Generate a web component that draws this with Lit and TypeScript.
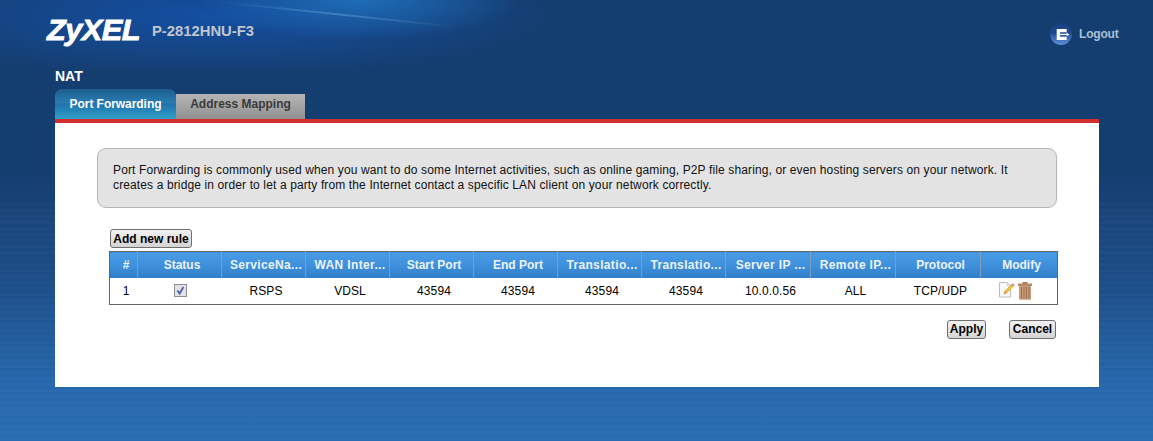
import { LitElement, html, css, svg } from "lit";
import { customElement } from "lit/decorators.js";

const HEADERS = ["#", "Status", "ServiceNa...", "WAN Inter...", "Start Port", "End Port", "Translatio...", "Translatio...", "Server IP ...", "Remote IP...", "Protocol", "Modify"];
const WIDTHS = [28, 84, 84, 84, 84, 84, 84, 84, 85, 85, 85, 77];
const CELLS = ["RSPS", "VDSL", "43594", "43594", "43594", "43594", "10.0.0.56", "ALL", "TCP/UDP"];

const logoutIcon = svg`<svg width="22" height="22" viewBox="0 0 22 22">
  <defs><linearGradient id="lg" x1="0" y1="0" x2="0" y2="1">
    <stop offset="0" stop-color="#1a3f80"/><stop offset=".5" stop-color="#1f4a8f"/><stop offset=".55" stop-color="#2d5ca6"/><stop offset="1" stop-color="#5b8fd2"/>
  </linearGradient></defs>
  <circle cx="11" cy="11" r="11" fill="url(#lg)"/>
  <path d="M6.7 6h10v3.2H10v4.6h6.7V17h-10z" fill="#fff"/>
  <path d="M10 10.7h6.6V9.5L19.4 11.4 16.6 13.2v-1.2H10z" fill="#fff"/>
</svg>`;

const editIcon = svg`<svg width="16" height="16" viewBox="0 0 16 16">
  <path d="M.5 .5h8l3 3v11.5H.5z" fill="#f8f8f8" stroke="#bcbcbc"/>
  <path d="M8.5 .5v3h3" fill="#e4e4e4" stroke="#c8c8c8" stroke-width=".7"/>
  <path d="M5.8 9.2L12.4 2.6l1.8 1.8L7.6 11z" fill="#f4c534" stroke="#c98a1c" stroke-width=".5"/>
  <path d="M4.6 12.2l1.2-3 1.8 1.8z" fill="#e5603f"/>
  <path d="M12.4 2.6l1.3-1.3 1.8 1.8-1.3 1.3z" fill="#dc7a86"/>
</svg>`;

const trashIcon = svg`<svg width="14" height="18" viewBox="0 0 14 18">
  <rect x="4.5" y="0" width="5" height="2" fill="#a67a58"/>
  <rect x="0" y="1.5" width="14" height="2.5" fill="#b58a68"/>
  <path d="M1 4h12v12.8q0 1-1 1H2q-1 0-1-1z" fill="#c99d7c"/>
  <path d="M3.5 5v11.5M6 5v11.5M8.5 5v11.5M11 5v11.5" stroke="#9b6d4c" stroke-width="1"/>
</svg>`;

const checkIcon = svg`<svg width="13" height="13" viewBox="0 0 13 13">
  <rect x=".5" y=".5" width="12" height="12" fill="#e2e2e8" stroke="#8f8f98"/>
  <path d="M3.4 6.5l2.2 3 3.8-6.5" fill="none" stroke="#4a62ad" stroke-width="1.8"/>
</svg>`;

@customElement("app-root")
export class AppRoot extends LitElement {
  static styles = css`
    :host {
      display: block;
      width: 1153px;
      height: 441px;
      overflow: hidden;
      position: relative;
      font-family: "Liberation Sans", Arial, sans-serif;
      background: linear-gradient(180deg, #153e70 0, #153e70 170px, #1c4d87 280px, #2667ac 385px, #2a6cb2 441px);
    }
    .glow {
      position: absolute;
      left: 0;
      top: 0;
      width: 560px;
      height: 70px;
      background:
        radial-gradient(ellipse 160px 40px at 360px 0, rgba(32, 115, 190, 0.85), rgba(32, 115, 190, 0) 100%),
        radial-gradient(ellipse 340px 62px at 210px 15px, rgba(20, 80, 165, 0.95), rgba(20, 70, 150, 0) 100%);
    }
    .streak {
      position: absolute;
      left: 220px;
      top: 1px;
      width: 240px;
      height: 1.5px;
      transform: rotate(6deg);
      transform-origin: left;
      background: linear-gradient(90deg, rgba(140, 190, 240, 0), rgba(150, 200, 240, 0.3), rgba(140, 190, 240, 0));
    }
    .stripes {
      position: absolute;
      left: 0;
      right: 0;
      top: 200px;
      bottom: 0;
      background: repeating-linear-gradient(180deg, rgba(255, 255, 255, 0) 0 3px, rgba(255, 255, 255, 0.02) 3px 6px);
    }
    .page {
      position: relative;
      display: flex;
      flex-direction: column;
      padding: 0 54px 0 55px;
    }
    .head {
      height: 68px;
      display: flex;
      align-items: flex-start;
    }
    .logo {
      margin: 15px 0 0 -8px;
      width: 105px;
      font: italic 700 29px/30px "Liberation Sans", sans-serif;
      color: #fff;
      letter-spacing: -0.5px;
      transform: scaleX(1.06);
      transform-origin: left;
      -webkit-text-stroke: 0.8px #fff;
    }
    .model {
      margin: 22px 0 0 0;
      font: 700 14.8px/18px "Liberation Sans", sans-serif;
      color: #c0c6cf;
    }
    .logout {
      margin: 23px -19px 0 auto;
      width: 68px;
      display: flex;
      align-items: center;
      gap: 7px;
      font: 700 12px/20px "Liberation Sans", sans-serif;
      letter-spacing: -0.2px;
      color: #a9c0d6;
    }
    .logout svg {
      flex: none;
    }
    .title {
      font: 700 14px/16px "Liberation Sans", sans-serif;
      color: #fff;
    }
    .tabs {
      display: flex;
      align-items: flex-end;
      height: 35px;
    }
    .tab {
      font: 700 12px/1 "Liberation Sans", sans-serif;
      display: flex;
      align-items: center;
      justify-content: center;
      box-sizing: border-box;
    }
    .tab.on {
      width: 121px;
      height: 30px;
      border-radius: 7px 7px 0 0;
      color: #fff;
      letter-spacing: -0.05px;
      background: linear-gradient(180deg, #1c5f8f 0, #2a7bb0 45%, #2072ac 50%, #2ea0c8 100%);
    }
    .tab.off {
      width: 129px;
      height: 25px;
      padding-bottom: 5px;
      color: #3a3a3a;
      background: linear-gradient(180deg, #b4b4b4 0, #a2a2a2 55%, #8f8f8f 100%);
    }
    .panel {
      height: 264px;
      border-top: 4px solid #d32f30;
      background: #fff;
      display: flex;
      flex-direction: column;
      padding: 0 42px;
    }
    .info {
      margin-top: 25px;
      height: 60px;
      box-sizing: border-box;
      border: 1px solid #b4b4b4;
      border-radius: 9px;
      background: #e3e3e3;
      padding: 14px 0 0 15px;
      font-size: 12px;
      line-height: 15px;
      letter-spacing: 0.125px;
      white-space: nowrap;
      color: #111;
    }
    .btn {
      box-sizing: border-box;
      font: 700 12px/1 "Liberation Sans", sans-serif;
      color: #000;
      height: 19px;
      padding: 0;
      display: flex;
      align-items: center;
      justify-content: center;
      border: 1px solid #6f6f6f;
      border-radius: 3px;
      background: linear-gradient(180deg, #f2f2f2, #d4d4d4);
    }
    .add {
      margin: 21px 0 3px 13px;
      width: 82px;
    }
    table {
      margin-left: 12px;
      width: 948px;
      border-collapse: collapse;
      table-layout: fixed;
      border: 1px solid #666;
      font-size: 12px;
    }
    th {
      height: 26px;
      padding: 0 0 0 5px;
      box-sizing: border-box;
      font: 700 12px/1 "Liberation Sans", sans-serif;
      color: #eaf3fb;
      background: linear-gradient(180deg, #4a9ce6 0, #3f90dc 50%, #2f7dc8 100%);
      border-left: 1px solid #7f9dba;
      text-align: center;
      white-space: nowrap;
      overflow: hidden;
    }
    th.cut {
      letter-spacing: 0.35px;
    }
    th:first-child {
      border-left: none;
    }
    td {
      height: 26px;
      padding: 0 0 0 5px;
      text-align: center;
      color: #000;
      background: #fff;
      letter-spacing: 0.1px;
    }
    td svg {
      display: block;
      margin: auto;
    }
    td.check {
      padding-left: 2px;
    }
    td.modify {
      padding: 0 7px 0 0;
    }
    .icons {
      display: flex;
      justify-content: center;
      align-items: flex-start;
      gap: 3px;
      height: 18px;
    }
    .icons svg {
      margin: 0;
    }
    .actions {
      display: flex;
      justify-content: flex-end;
      gap: 23px;
      margin-top: 15px;
      margin-right: 1px;
    }
    .apply { width: 39px; }
    .cancel { width: 47px; }
  `;

  render() {
    return html`
      <div class="glow"></div>
      <div class="streak"></div>
      <div class="stripes"></div>
      <div class="page">
        <div class="head">
          <div class="logo">ZyXEL</div>
          <div class="model">P-2812HNU-F3</div>
          <div class="logout">${logoutIcon}<span>Logout</span></div>
        </div>
        <div class="title">NAT</div>
        <div class="tabs">
          <div class="tab on">Port Forwarding</div>
          <div class="tab off">Address Mapping</div>
        </div>
        <div class="panel">
          <div class="info">
            Port Forwarding is commonly used when you want to do some Internet activities, such as online gaming, P2P file sharing, or even hosting servers on your network. It<br />
            creates a bridge in order to let a party from the Internet contact a specific LAN client on your network correctly.
          </div>
          <button class="btn add">Add new rule</button>
          <table>
            <colgroup>
              ${WIDTHS.map((w) => html`<col style="width:${w}px" />`)}
            </colgroup>
            <tr>${HEADERS.map((h) => html`<th class=${h.endsWith("...") ? "cut" : ""}>${h}</th>`)}</tr>
            <tr>
              <td>1</td>
              <td class="check">${checkIcon}</td>
              ${CELLS.map((c) => html`<td>${c}</td>`)}
              <td class="modify"><div class="icons">${editIcon}${trashIcon}</div></td>
            </tr>
          </table>
          <div class="actions">
            <button class="btn apply">Apply</button>
            <button class="btn cancel">Cancel</button>
          </div>
        </div>
      </div>
    `;
  }
}
